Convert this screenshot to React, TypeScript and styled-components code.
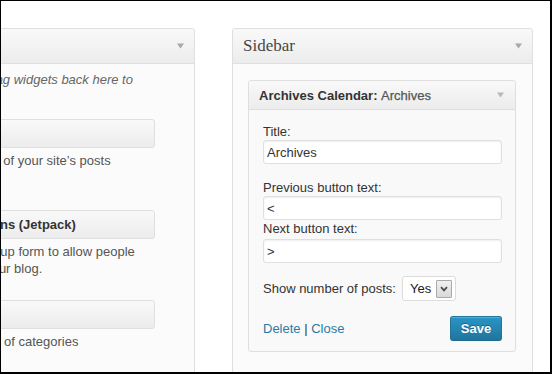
import React from "react";
import styled, { createGlobalStyle } from "styled-components";

const Global = createGlobalStyle`
  html, body { margin: 0; padding: 0; background: #fff; }
  body { font-family: "Liberation Sans", Arial, sans-serif; }
`;

const Frame = styled.div`
  width: 552px;
  height: 374px;
  box-sizing: border-box;
  border-style: solid;
  border-color: #000;
  border-width: 1px 2px 2px 1px;
  background: #fff;
  overflow: hidden;
  display: flex;
  align-items: flex-start;
  padding-top: 27px;
  font-family: "Liberation Sans", Arial, sans-serif;
  font-size: 13px;
  color: #333;
`;

const Panel = styled.section<{ $width: number; $offset: number }>`
  flex: none;
  width: ${(p) => p.$width}px;
  margin-left: ${(p) => p.$offset}px;
  height: 420px;
  box-sizing: border-box;
  border: 1px solid #dfdfdf;
  border-radius: 3px;
  background: #fbfbfb;
  display: flex;
  flex-direction: column;
`;

const PanelHeader = styled.div`
  flex: none;
  height: 34px;
  border-bottom: 1px solid #dfdfdf;
  border-radius: 3px 3px 0 0;
  background: linear-gradient(to bottom, #f9f9f9, #ececec);
  display: flex;
  align-items: center;
  justify-content: space-between;
  padding: 0 10px;
`;

const SidebarName = styled.h3`
  margin: 0;
  font-family: "Liberation Serif", "Times New Roman", serif;
  font-weight: normal;
  font-size: 17px;
  color: #464646;
`;

const Arrow = styled.svg<{ $tone: string }>`
  flex: none;
  width: 7px;
  height: 6px;
  fill: ${(p) => p.$tone};
`;

const Toggle = ({ tone }: { tone: string }) => (
  <Arrow $tone={tone} viewBox="0 0 7 6">
    <polygon points="0,0.5 7,0.5 3.5,5.5" />
  </Arrow>
);

const AvailableBody = styled.div`
  padding: 7px 39px 0 23px;
  display: flex;
  flex-direction: column;
`;

const Intro = styled.p`
  margin: 0;
  font-style: italic;
  color: #666;
  line-height: 17px;
  white-space: nowrap;
`;

const WidgetList = styled.div`
  margin-top: 14px;
  display: flex;
  flex-direction: column;
  align-items: flex-end;
`;

const Entry = styled.div`
  flex: none;
  width: 270px;
  height: 90.5px;
`;

const EntryTop = styled.div`
  height: 29px;
  box-sizing: border-box;
  border: 1px solid #dfdfdf;
  border-radius: 3px;
  background: linear-gradient(to bottom, #f9f9f9, #ececec);
  display: flex;
  align-items: center;
  padding-left: 10px;
  font-weight: bold;
  color: #333;
  white-space: nowrap;
`;

const EntryDesc = styled.div`
  margin-top: 4px;
  padding-left: 12px;
  color: #555;
  line-height: 17px;
  white-space: nowrap;
`;

const SidebarBody = styled.div`
  padding: 16px 16px 0 15px;
`;

const Widget = styled.div`
  border: 1px solid #dfdfdf;
  border-radius: 3px;
  background: #f9f9f9;
`;

const WidgetTop = styled.div`
  height: 28px;
  border-bottom: 1px solid #dfdfdf;
  border-radius: 3px 3px 0 0;
  background: linear-gradient(to bottom, #f9f9f9, #ececec);
  display: flex;
  align-items: center;
  justify-content: space-between;
  padding: 0 11px 0 10px;
`;

const WidgetTitle = styled.h4`
  margin: 0;
  font-size: 13px;
  font-weight: bold;
  color: #333;
`;

const InTitle = styled.span`
  font-weight: normal;
  color: #555;
  -webkit-text-stroke: 0.25px #555;
`;

const WidgetInside = styled.div`
  padding: 13px 13px 10px 14px;
`;

const Field = styled.div<{ $mt: number }>`
  margin-top: ${(p) => p.$mt}px;
`;

const Label = styled.div`
  line-height: 17px;
  color: #333;
`;

const TextInput = styled.input<{ $mt?: number }>`
  display: block;
  width: 100%;
  height: 24px;
  margin: ${(p) => p.$mt ?? 0}px 0 0;
  box-sizing: border-box;
  border: 1px solid #dfdfdf;
  border-radius: 3px;
  background: #fff;
  box-shadow: inset 0 1px 2px rgba(0, 0, 0, 0.07);
  padding: 0 3px;
  font-family: "Liberation Sans", Arial, sans-serif;
  font-size: 13px;
  color: #333;
  outline: none;
`;

const SelectRow = styled.div`
  margin-top: 13px;
  display: flex;
  align-items: center;
  gap: 6px;
`;

const SelectBox = styled.div`
  width: 54px;
  height: 25px;
  box-sizing: border-box;
  border: 1px solid #dcdcdc;
  border-radius: 3px;
  background: #fff;
  display: flex;
  align-items: center;
  padding: 0 3px 0 7px;
  font-size: 13px;
  color: #222;
`;

const SelectArrow = styled.span`
  margin-left: auto;
  width: 16px;
  height: 18px;
  box-sizing: border-box;
  border: 1px solid #a9a9a9;
  border-radius: 1px;
  background: linear-gradient(to bottom, #f1f1f1, #d9d9d9);
  display: flex;
  align-items: center;
  justify-content: center;
`;

const Chevron = styled.svg`
  width: 8px;
  height: 6px;
  fill: none;
  stroke: #4a4a4a;
  stroke-width: 1.7;
`;

const Actions = styled.div`
  margin-top: 15px;
  display: flex;
  align-items: center;
  justify-content: space-between;
`;

const Links = styled.div`
  color: #333;
`;

const Link = styled.a`
  color: #2e7aa2;
  text-decoration: none;
`;

const SaveButton = styled.button`
  width: 52px;
  height: 25px;
  box-sizing: border-box;
  border: 1px solid #21759b;
  border-bottom-color: #1e6a8d;
  border-radius: 3px;
  background: linear-gradient(to bottom, #2a95c5, #21759b);
  box-shadow: inset 0 1px 0 rgba(120, 200, 230, 0.5);
  color: #fff;
  font-family: "Liberation Sans", Arial, sans-serif;
  font-size: 13px;
  font-weight: bold;
  text-shadow: 0 -1px 0 rgba(0, 0, 0, 0.3);
  padding: 0;
`;

const available = [
  { title: "Archives", desc: ["A monthly archive of your site\u2019s posts"] },
  {
    title: "Blog Subscriptions (Jetpack)",
    desc: ["Add an email signup form to allow people", "to subscribe to your blog."],
  },
  { title: "Categories", desc: ["A list or dropdown of categories"] },
];

export default function App() {
  return (
    <>
      <Global />
      <Frame>
        <Panel $width={615} $offset={-421}>
          <PanelHeader>
            <SidebarName>Available Widgets</SidebarName>
            <Toggle tone="#a8a8a8" />
          </PanelHeader>
          <AvailableBody>
            <Intro>
              Drag widgets from here to a sidebar on the right to activate them. Drag widgets back here to
              <br />
              deactivate them and delete their settings.
            </Intro>
            <WidgetList>
              {available.map((w) => (
                <Entry key={w.title}>
                  <EntryTop>{w.title}</EntryTop>
                  <EntryDesc>
                    {w.desc.map((line, i) => (
                      <div key={i}>{line}</div>
                    ))}
                  </EntryDesc>
                </Entry>
              ))}
            </WidgetList>
          </AvailableBody>
        </Panel>

        <Panel $width={301} $offset={37}>
          <PanelHeader>
            <SidebarName>Sidebar</SidebarName>
            <Toggle tone="#a8a8a8" />
          </PanelHeader>
          <SidebarBody>
            <Widget>
              <WidgetTop>
                <WidgetTitle>
                  Archives Calendar: <InTitle>Archives</InTitle>
                </WidgetTitle>
                <Toggle tone="#b8b8b8" />
              </WidgetTop>
              <WidgetInside>
                <Field $mt={0}>
                  <Label>Title:</Label>
                  <TextInput defaultValue="Archives" />
                </Field>
                <Field $mt={15}>
                  <Label>Previous button text:</Label>
                  <TextInput defaultValue="<" />
                </Field>
                <Field $mt={0}>
                  <Label>Next button text:</Label>
                  <TextInput defaultValue=">" $mt={2} />
                </Field>
                <SelectRow>
                  <Label>Show number of posts:</Label>
                  <SelectBox>
                    Yes
                    <SelectArrow>
                      <Chevron viewBox="0 0 8 6">
                        <polyline points="1,1.2 4,4.4 7,1.2" />
                      </Chevron>
                    </SelectArrow>
                  </SelectBox>
                </SelectRow>
                <Actions>
                  <Links>
                    <Link href="#">Delete</Link> | <Link href="#">Close</Link>
                  </Links>
                  <SaveButton type="button">Save</SaveButton>
                </Actions>
              </WidgetInside>
            </Widget>
          </SidebarBody>
        </Panel>
      </Frame>
    </>
  );
}
